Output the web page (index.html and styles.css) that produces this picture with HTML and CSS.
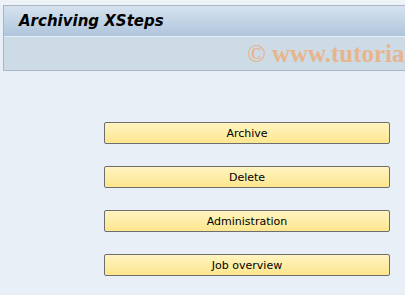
FILE: index.html
```html
<!DOCTYPE html>
<html lang="en">
<head>
    <meta charset="UTF-8">
    <title>Archiving XSteps</title>
    <link rel="stylesheet" href="styles.css">
</head>
<body>
    <div class="top-strip"></div>
    <div class="header">
        <div class="title-bar">
            <h1>Archiving XSteps</h1>
        </div>
        <div class="toolbar">
            <span class="watermark">&copy; www.tutorialkart.com</span>
        </div>
    </div>
    <div class="steps">
        <button class="step">Archive</button>
        <button class="step">Delete</button>
        <button class="step">Administration</button>
        <button class="step">Job overview</button>
    </div>
</body>
</html>
```
FILE: styles.css
```css
body {
    margin: 0;
    padding: 0;
    background-color: #e9eff7;
    font-family: 'DejaVu Sans', sans-serif;
    overflow: hidden;
}

.top-strip {
    height: 5px;
    background-color: #eef3f8;
}

.header {
    margin-left: 3px;
    border-top: 1px solid #a9b6c6;
    border-left: 1px solid #a9b6c6;
    border-bottom: 1px solid #a9b6c6;
}

.title-bar {
    height: 30px;
    background: linear-gradient(#d6e2ee, #afc5dc);
    display: flex;
    align-items: center;
    padding-left: 15px;
}

h1 {
    margin: 0;
    font-family: 'DejaVu Sans', sans-serif;
    font-size: 15px;
    font-weight: bold;
    font-style: italic;
    color: #000;
}

.toolbar {
    height: 33px;
    background-color: #cddbe7;
    border-top: 1px solid #e4ecf4;
    white-space: nowrap;
    overflow: hidden;
    padding-left: 243px;
}

.watermark {
    font-family: 'Liberation Serif', serif;
    font-weight: bold;
    font-size: 25px;
    line-height: 33px;
    color: #e7b58c;
}

.steps {
    padding: 51px 0 0 104px;
    display: flex;
    flex-direction: column;
    gap: 22px;
}

.step {
    width: 286px;
    height: 22px;
    padding: 0;
    border: 1px solid #6e6e6e;
    border-radius: 2px;
    background: linear-gradient(#fff4c0, #fde68e);
    font-family: 'DejaVu Sans', sans-serif;
    font-size: 11px;
    color: #000;
    cursor: pointer;
}
```
